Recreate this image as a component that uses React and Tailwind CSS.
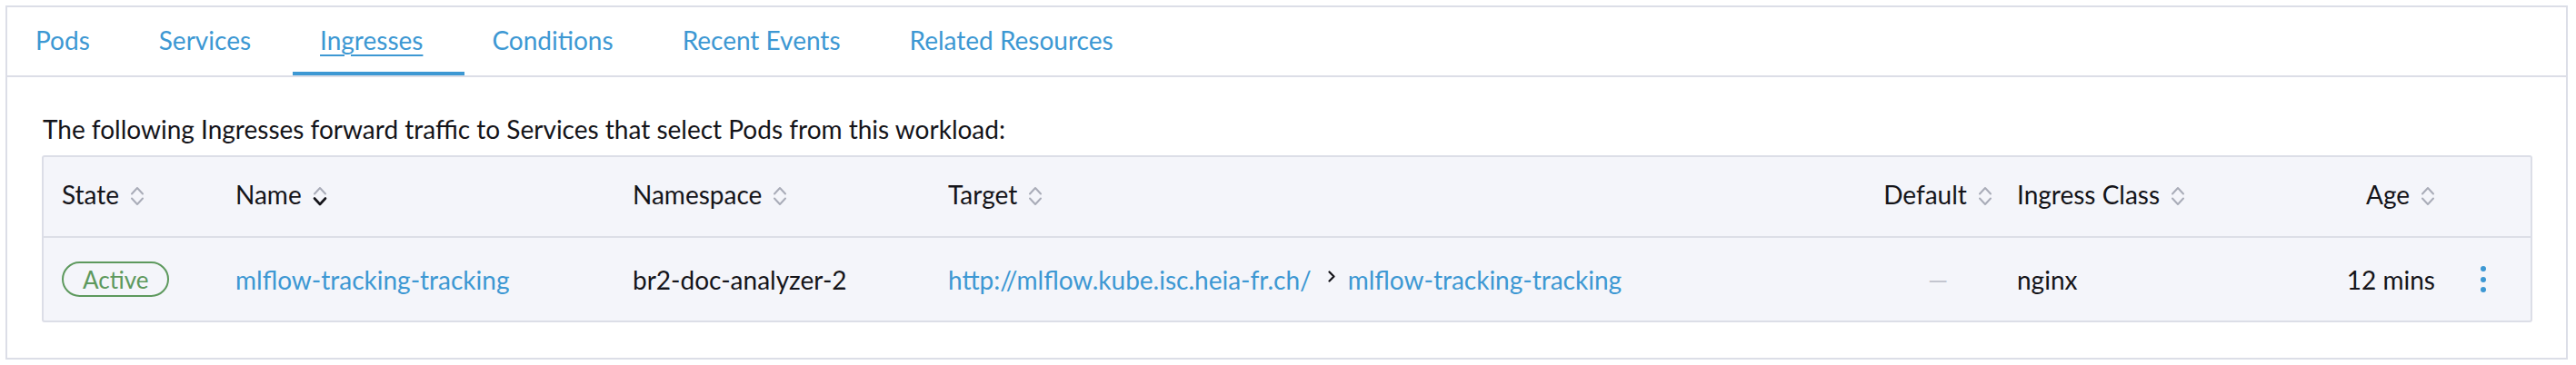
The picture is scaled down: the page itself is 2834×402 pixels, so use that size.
import React from 'react';

const tabs = ['Pods', 'Services', 'Ingresses', 'Conditions', 'Recent Events', 'Related Resources'];

const columns = [
  { label: 'State', align: 'start' },
  { label: 'Name', align: 'start', sorted: true },
  { label: 'Namespace', align: 'start' },
  { label: 'Target', align: 'start' },
  { label: 'Default', align: 'center' },
  { label: 'Ingress Class', align: 'start' },
  { label: 'Age', align: 'end' },
];

function SortIcon({ active }) {
  return (
    <svg width="16" height="24" viewBox="0 0 16 24" fill="none" strokeLinecap="round" strokeLinejoin="round" className="ml-[12px] mt-[5px] shrink-0">
      <path d="M2 9.5 L8 3 L14 9.5" stroke="#a9acb8" strokeWidth="2" />
      <path d="M2 14.5 L8 21 L14 14.5" stroke={active ? '#141419' : '#a9acb8'} strokeWidth={active ? 2.6 : 2} />
    </svg>
  );
}

function Chevron() {
  return (
    <svg width="10" height="13" viewBox="0 0 10 13" fill="none" className="ml-[17px] mr-[13px] mb-[6px] shrink-0">
      <path d="M2.5 1.5 L7.5 6.5 L2.5 11.5" stroke="#141419" strokeWidth="2.2" strokeLinecap="round" strokeLinejoin="round" />
    </svg>
  );
}

export default function App() {
  const justify = { start: 'justify-start', center: 'justify-center', end: 'justify-end' };

  return (
    <div className="min-h-[402px] bg-white pt-[6px] pl-[6px] font-['Lato',sans-serif] text-[28px] leading-[34px] text-[#141419]">
      <div className="w-[2819px] border-2 border-[#dcdee7] bg-white">
        {/* Tabs */}
        <div className="flex h-[77px] border-b-2 border-[#dcdee7] pl-[1px]">
          {tabs.map((t) => {
            const active = t === 'Ingresses';
            return (
              <div
                key={t}
                className={
                  'flex h-full items-center border-b-4 pl-[30px] pr-[46px] text-[#3d98d3] ' +
                  (active ? 'border-[#3d98d3]' : 'border-transparent')
                }
              >
                <span className={active ? 'underline decoration-2 underline-offset-[5px]' : ''}>{t}</span>
              </div>
            );
          })}
        </div>

        {/* Content */}
        <div className="pl-[38px] pr-[37px] pt-[40px] pb-[39px]">
          <p className="mb-[12px] pl-[1px]">
            The following Ingresses forward traffic to Services that select Pods from this workload:
          </p>

          <div className="rounded-[3px] border-2 border-[#dcdee7] bg-[#f4f5fa]">
            <div className="grid h-[89px] grid-cols-[191px_437px_347px_1042px_134px_320px_180px_85px] border-b-2 border-[#dcdee7]">
              {columns.map((c) => (
                <div key={c.label} className={'flex items-center whitespace-nowrap px-[20px] pb-[6px] ' + justify[c.align]}>
                  <span>{c.label}</span>
                  <SortIcon active={c.sorted} />
                </div>
              ))}
              <div />
            </div>

            <div className="grid h-[91px] grid-cols-[191px_437px_347px_1042px_134px_320px_180px_85px] items-center whitespace-nowrap">
              <div className="px-[20px]">
                <span className="inline-flex h-[39px] items-center rounded-full border-2 border-[#5d995d] px-[21px] text-[26px] text-[#5d995d]">
                  Active
                </span>
              </div>
              <div className="px-[20px] text-[#3d98d3]">mlflow-tracking-tracking</div>
              <div className="px-[20px]">br2-doc-analyzer-2</div>
              <div className="flex items-center px-[20px] text-[#3d98d3]">
                <span>http://mlflow.kube.isc.heia-fr.ch/</span>
                <Chevron />
                <span>mlflow-tracking-tracking</span>
              </div>
              <div className="flex justify-center px-[20px] text-[#c3c5cf]">—</div>
              <div className="px-[20px]">nginx</div>
              <div className="flex justify-end px-[20px]">12 mins</div>
              <div className="flex flex-col gap-[5.5px] pl-[30px]">
                <span className="h-[6px] w-[6px] rounded-full bg-[#3d98d3]" />
                <span className="h-[6px] w-[6px] rounded-full bg-[#3d98d3]" />
                <span className="h-[6px] w-[6px] rounded-full bg-[#3d98d3]" />
              </div>
            </div>
          </div>
        </div>
      </div>
    </div>
  );
}
